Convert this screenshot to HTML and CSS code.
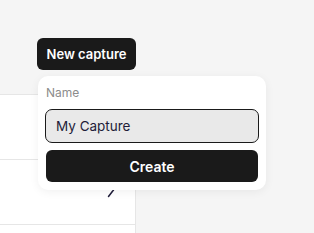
FILE: index.html
```
<!DOCTYPE html>
<html>
<head>
	<title>Captures</title>
	<link rel="stylesheet" href="styles.css">
</head>
<body>
	<div class="sidebar">
		<div class="header">
			<div class="capture-wrap">
				<button class="btn-new">New capture</button>
				<div class="popover">
					<label class="field-label" for="capture-name">Name</label>
					<input id="capture-name" class="field-input" type="text" value="My Capture">
					<button class="btn-create">Create</button>
				</div>
			</div>
		</div>
		<ul class="list">
			<li class="row">
				<svg class="chev" viewBox="0 0 8 16" width="8" height="16"><path d="M1.5 1.5l5 6.5-5 6.5" fill="none" stroke="#1f1d3a" stroke-width="1.5" stroke-linecap="round" stroke-linejoin="round"/></svg>
			</li>
			<li class="row">
				<svg class="chev" viewBox="0 0 8 16" width="8" height="16"><path d="M1.5 1.5l5 6.5-5 6.5" fill="none" stroke="#1f1d3a" stroke-width="1.5" stroke-linecap="round" stroke-linejoin="round"/></svg>
			</li>
			<li class="row"></li>
		</ul>
	</div>
	<script>
		var inp = document.querySelector("#capture-name");
		inp.focus();
		inp.setSelectionRange(inp.value.length, inp.value.length);
	</script>
</body>
</html>
```
FILE: styles.css
```
html, body{
	overflow: hidden;
}
body{
	margin: 0;
	background: #f5f5f5;
	font-family: "Inter", "Liberation Sans", sans-serif;
}
.sidebar{
	width: 136px;
}
.header{
	height: 94px;
	box-sizing: border-box;
	padding: 38px 0 0 37px;
}
.capture-wrap{
	position: relative;
	display: inline-block;
}
.btn-new{
	display: block;
	height: 32px;
	width: 99px;
	border: none;
	border-radius: 6px;
	background: #1a1a1a;
	color: #fff;
	font-family: inherit;
	font-size: 13px;
	font-weight: 600;
	padding: 0;
}
.popover{
	position: absolute;
	top: 38px;
	left: 1px;
	width: 228px;
	box-sizing: border-box;
	padding: 8px;
	background: #fff;
	border-radius: 10px;
	box-shadow: 0 2px 10px rgba(0,0,0,0.06);
	z-index: 2;
}
.field-label{
	display: block;
	height: 17px;
	margin-bottom: 8px;
	font-size: 12px;
	line-height: 17px;
	color: #8c8c8c;
}
.field-input{
	display: block;
	width: 214px;
	height: 34px;
	margin: 0 -1px;
	box-sizing: border-box;
	border: 1px solid #1a1a1a;
	border-radius: 7px;
	background: #e9e9e9;
	padding: 0 10px;
	font-family: inherit;
	font-size: 13.5px;
	color: #1f1d3a;
	outline: none;
	caret-color: #1f1d3a;
}
.btn-create{
	display: block;
	width: 100%;
	height: 32px;
	margin-top: 7px;
	border: none;
	border-radius: 6px;
	background: #1a1a1a;
	color: #fff;
	font-family: inherit;
	font-size: 14px;
	font-weight: 600;
}
.list{
	list-style: none;
	margin: 0;
	padding: 0;
	background: #fff;
	border-top: 1px solid #e6e6e6;
	border-right: 1px solid #e6e6e6;
}
.row{
	height: 64px;
	border-bottom: 1px solid #e6e6e6;
	display: flex;
	align-items: center;
	justify-content: flex-end;
	padding-right: 20px;
}
.row:last-child{
	border-bottom: none;
}
.chev{
	margin-top: -4px;
}
```
